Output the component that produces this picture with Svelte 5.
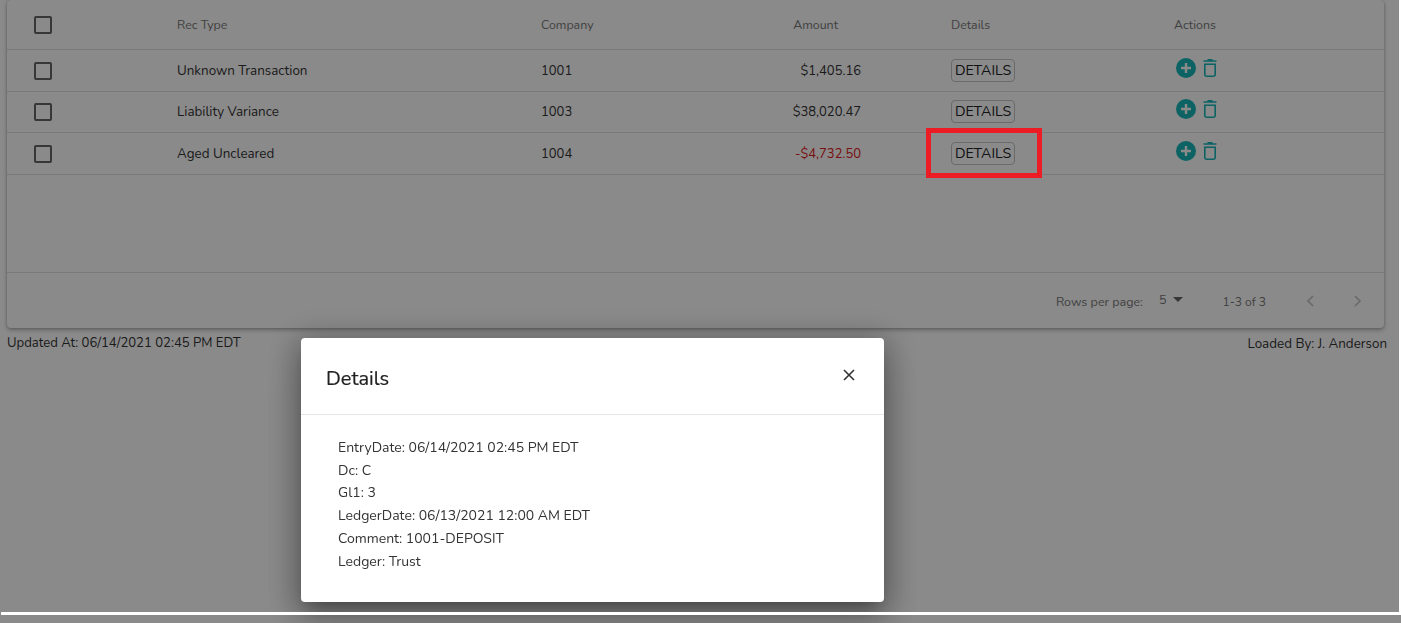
<script>
  const rows = [
    { type: 'Unknown Transaction', company: '1001', amount: '$1,405.16' },
    { type: 'Liability Variance', company: '1003', amount: '$38,020.47' },
    { type: 'Aged Uncleared', company: '1004', amount: '-$4,732.50', negative: true }
  ];

  const details = [
    'EntryDate: 06/14/2021 02:45 PM EDT',
    'Dc: C',
    'Gl1: 3',
    'LedgerDate: 06/13/2021 12:00 AM EDT',
    'Comment: 1001-DEPOSIT',
    'Ledger: Trust'
  ];
</script>

<div class="page">
  <div class="card">
    <div class="row head">
      <div class="cell check"><span class="box"></span></div>
      <div class="cell type">Rec Type</div>
      <div class="cell company">Company</div>
      <div class="cell amount">Amount</div>
      <div class="cell details">Details</div>
      <div class="cell actions">Actions</div>
    </div>
    {#each rows as row}
      <div class="row">
        <div class="cell check"><span class="box"></span></div>
        <div class="cell type">{row.type}</div>
        <div class="cell company">{row.company}</div>
        <div class="cell amount" class:negative={row.negative}>{row.amount}</div>
        <div class="cell details">
          <span class="details-btn">DETAILS</span>
        </div>
        <div class="cell actions">
          <svg class="add" viewBox="0 0 20 20" width="20" height="20">
            <circle cx="10" cy="10" r="10" fill="#18b8ba" />
            <path d="M10 5v10M5 10h10" stroke="#fff" stroke-width="2.4" fill="none" />
          </svg>
          <svg class="trash" viewBox="0 0 14 18" width="14" height="18">
            <path d="M0.5 2h13M4.5 0.8h5" stroke="#18b8ba" stroke-width="1.6" fill="none" />
            <path d="M1.8 5.3h10.4v10.2a1.7 1.7 0 0 1-1.7 1.7h-7a1.7 1.7 0 0 1-1.7-1.7z" stroke="#18b8ba" stroke-width="1.6" fill="none" />
          </svg>
        </div>
      </div>
    {/each}
    <div class="empty"></div>
    <div class="pager">
      <span class="rows-label">Rows per page:</span>
      <span class="rows-value">5</span>
      <span class="caret"></span>
      <span class="range">1-3 of 3</span>
      <svg class="chev" viewBox="0 0 8 12" width="8" height="12"><path d="M7 1 2 6l5 5" fill="none" stroke="#c4c4c4" stroke-width="1.7" /></svg>
      <svg class="chev next" viewBox="0 0 8 12" width="8" height="12"><path d="M1 1l5 5-5 5" fill="none" stroke="#c4c4c4" stroke-width="1.7" /></svg>
    </div>
  </div>
  <div class="status">
    <span>Updated At: 06/14/2021 02:45 PM EDT</span>
    <span class="loaded">Loaded By: J. Anderson</span>
  </div>
</div>

<div class="overlay">
  <div class="dialog">
    <div class="dialog-head">
      <span class="dialog-title">Details</span>
      <svg class="close" viewBox="0 0 12 12" width="12" height="12"><path d="M1 1l10 10M11 1 1 11" stroke="#333" stroke-width="1.6" fill="none" /></svg>
    </div>
    <div class="dialog-body">
      {#each details as line}
        <div class="line">{line}</div>
      {/each}
    </div>
  </div>
</div>

<!-- annotation and capture edges sit above the dimmed layer -->
<div class="callout"></div>
<div class="edge-right"></div>
<div class="edge-bottom"></div>

<style>
  :global(body) {
    margin: 0;
    background: #fff;
    font-family: "Nunito", "Noto Sans", "Open Sans", sans-serif;
    color: #333;
    overflow: hidden;
  }

  .page {
    height: 623px;
    padding: 0 14px 0 7px;
    box-sizing: border-box;
  }

  .card {
    background: #fff;
    border-radius: 4px;
    box-shadow: 0 2px 4px rgba(0, 0, 0, 0.3), 0 0 2px rgba(0, 0, 0, 0.2);
    width: 1377px;
    height: 328px;
    display: flex;
    flex-direction: column;
  }

  .row {
    display: flex;
    align-items: center;
    height: 41px;
    border-bottom: 1px solid #e0e0e0;
    font-size: 13px;
    color: #333;
  }

  .row:nth-child(3) {
    height: 39px;
    padding-bottom: 1px;
  }

  .head {
    height: 49px;
    font-size: 12.4px;
    color: #777;
  }

  .check {
    width: 170px;
    padding-left: 27px;
    box-sizing: border-box;
    display: flex;
  }

  .box {
    width: 14px;
    height: 14px;
    border: 2px solid #666;
    border-radius: 2px;
    display: block;
  }

  .type {
    width: 364px;
    font-size: 13.4px;
  }

  .head .type {
    font-size: 12.4px;
  }

  .company {
    width: 140px;
  }

  .amount {
    width: 180px;
    text-align: right;
  }

  .head .amount {
    padding-right: 23px;
    box-sizing: border-box;
  }

  .negative {
    color: #e02020;
  }

  .details {
    width: 223px;
    padding-left: 90px;
  }

  .details-btn {
    display: inline-block;
    border: 1px solid #c4c4c4;
    border-radius: 4px;
    padding: 1px 3px;
    color: #222;
    font-size: 14.2px;
    line-height: 19px;
  }

  .actions {
    display: flex;
    gap: 7px;
    align-items: center;
    margin-top: -5px;
    padding-left: 2px;
  }

  .head .actions {
    margin-top: 0;
    padding-left: 0;
  }

  .empty {
    flex: 1;
    border-bottom: 1px solid #e0e0e0;
  }

  .pager {
    height: 55px;
    display: flex;
    align-items: center;
    justify-content: flex-end;
    font-size: 12.5px;
    color: #777;
    padding-right: 22px;
  }

  .rows-label,
  .range {
    margin-top: 2px;
  }

  .rows-value {
    margin-left: 16px;
    margin-top: -3px;
  }

  .caret {
    width: 0;
    height: 0;
    border-left: 5px solid transparent;
    border-right: 5px solid transparent;
    border-top: 5px solid #666;
    margin-left: 6px;
    margin-top: -2px;
  }

  .range {
    font-size: 12px;
    margin-left: 40px;
  }

  .chev {
    margin-left: 40px;
  }

  .next {
    margin-left: 40px;
  }

  .status {
    display: flex;
    justify-content: space-between;
    width: 1380px;
    font-size: 13.1px;
    margin-top: 6px;
  }

  .loaded {
    font-size: 13.4px;
  }

  .overlay {
    position: fixed;
    inset: 0;
    background: rgba(0, 0, 0, 0.46);
  }

  .dialog {
    position: absolute;
    left: 301px;
    top: 338px;
    width: 583px;
    height: 264px;
    background: #fff;
    border-radius: 4px;
    box-shadow: 0 11px 15px -7px rgba(0, 0, 0, 0.25), 0 24px 38px 3px rgba(0, 0, 0, 0.14), 0 4px 30px 6px rgba(0, 0, 0, 0.28);
  }

  .dialog-head {
    height: 76px;
    border-bottom: 1px solid #e6e6e6;
    display: flex;
    align-items: center;
    justify-content: space-between;
    padding: 0 28px 0 25px;
  }

  .dialog-title {
    font-size: 20px;
    color: #222;
    margin-top: 4px;
    -webkit-text-stroke: 0.2px #222;
  }

  .close {
    margin-top: -2px;
    margin-right: 1px;
  }

  .dialog-body {
    padding: 22px 37px;
  }

  .line {
    font-size: 14px;
    line-height: 22.7px;
    color: #333;
  }

  .callout {
    position: fixed;
    left: 926px;
    top: 128px;
    width: 116px;
    height: 50px;
    border: 5px solid #ed1c24;
    box-sizing: border-box;
  }

  .edge-right {
    position: fixed;
    left: 1399px;
    top: 0;
    width: 2px;
    height: 612px;
    background: #fff;
  }

  .edge-bottom {
    position: fixed;
    left: 1px;
    right: 0;
    top: 612px;
    height: 3px;
    background: #fff;
  }
</style>
